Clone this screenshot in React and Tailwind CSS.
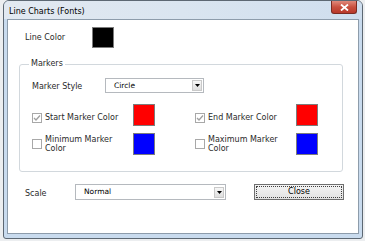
import React from "react";

const font = { fontFamily: '"DejaVu Sans", Verdana, sans-serif' };

const Swatch = ({ color }) => (
  <div className={`h-[22px] w-[22px] border border-[#7c7c7c] ${color}`} />
);

const CheckBox = ({ checked }) => (
  <div className="flex h-[10px] w-[10px] shrink-0 items-center justify-center border border-[#a8a8a8] bg-white">
    {checked && (
      <svg width="8" height="8" viewBox="0 0 8 8">
        <path d="M1 4 L3 6 L7 1.5" fill="none" stroke="#a0a0a0" strokeWidth="1.3" />
      </svg>
    )}
  </div>
);

const Combo = ({ value, width, height = "h-[15px]" }) => (
  <div className={`flex items-center border border-[#b5b9be] bg-white ${width} ${height}`}>
    <span className="flex-1 pl-[8px] text-[7.5px] leading-none text-black">{value}</span>
    <div className="mr-px flex h-[11px] w-[10px] items-center justify-center border border-[#c9c9c9] bg-gradient-to-b from-[#f7f7f7] to-[#dedede]">
      <svg width="5" height="3" viewBox="0 0 5 3">
        <path d="M0 0 H5 L2.5 3 Z" fill="#000" />
      </svg>
    </div>
  </div>
);

const MarkerCell = ({ checked, label, color, single }) => (
  <div className="flex items-center">
    <div className={`flex items-center ${single ? "mt-[5px]" : ""}`}>
      <CheckBox checked={checked} />
      <span className="ml-[3px] w-[88px] pr-[6px] text-[8px] leading-[9px] text-[#2a2a2a]">{label}</span>
    </div>
    <Swatch color={color} />
  </div>
);

export default function App() {
  return (
    <div className="h-[241px] w-[365px] overflow-hidden bg-[#eceef0] pl-[3px]" style={font}>
      <div className="flex h-[239px] w-[360px] flex-col rounded-t-[6px] rounded-b-[3px] border border-[#5d6873] bg-[#c9dbee]">
        {/* title bar */}
        <div className="flex h-[18px] items-start justify-between rounded-t-[5px] bg-gradient-to-r from-[#e2e9f1] via-[#dae5f0] to-[#cfdeee]">
          <span className="mt-[7px] pl-[5px] text-[8px] leading-none text-black">Line Charts (Fonts)</span>
          <div className="mr-[5px] flex h-[13px] w-[26px] items-center justify-center rounded-b-[3px] border border-t-0 border-[#7a2b22] bg-gradient-to-b from-[#e0897b] via-[#c9503f] to-[#b8382a]">
            <svg width="9" height="7" viewBox="0 0 9 7">
              <path d="M1 0.5 L8 6.5 M8 0.5 L1 6.5" stroke="#fff" strokeWidth="1.8" />
            </svg>
          </div>
        </div>

        {/* client area */}
        <div className="ml-[3px] h-[215px] w-[352px] border border-[#8d9cab] bg-white">
          <div className="mt-[7px] flex items-center pl-[17px]">
            <span className="w-[67px] text-[8px] leading-none text-[#2a2a2a]">Line Color</span>
            <div className="h-[21px] w-[22px] border border-[#7c7c7c] bg-black" />
          </div>

          <fieldset className="ml-[11px] mt-[11px] w-[324px] rounded-[3px] border border-[#d2d8dd] pb-[16px] pl-[12px]">
            <legend className="ml-[-3px] px-[2px] text-[8px] leading-[10px] text-[#2a2a2a]">Markers</legend>
            <div className="mt-[9px] flex items-center">
              <span className="mt-[3px] w-[73px] text-[8px] leading-none text-[#2a2a2a]">Marker Style</span>
              <Combo value="Circle" width="w-[99px]" />
            </div>
            <div className="mt-[11px] grid grid-cols-[163px_1fr] gap-y-[7px]">
              <MarkerCell checked single label="Start Marker Color" color="bg-[#ff0000]" />
              <MarkerCell checked single label="End Marker Color" color="bg-[#ff0000]" />
              <MarkerCell label="Minimum Marker Color" color="bg-[#0000ff]" />
              <MarkerCell label="Maximum Marker Color" color="bg-[#0000ff]" />
            </div>
          </fieldset>

          <div className="mt-[12px] flex items-center pl-[17px]">
            <span className="mt-[3px] w-[50px] text-[8px] leading-none text-[#2a2a2a]">Scale</span>
            <Combo value="Normal" width="w-[151px]" height="h-[16px]" />
            <div className="ml-[28px] h-[16px] w-[90px] border border-[#6f6f6f] bg-gradient-to-b from-[#f4f4f4] to-[#e2e2e2] p-[1px]">
              <div className="flex h-full w-full items-center justify-center border border-dotted border-[#404040] text-[8px] leading-none text-black">
                Close
              </div>
            </div>
          </div>
        </div>
      </div>
    </div>
  );
}
